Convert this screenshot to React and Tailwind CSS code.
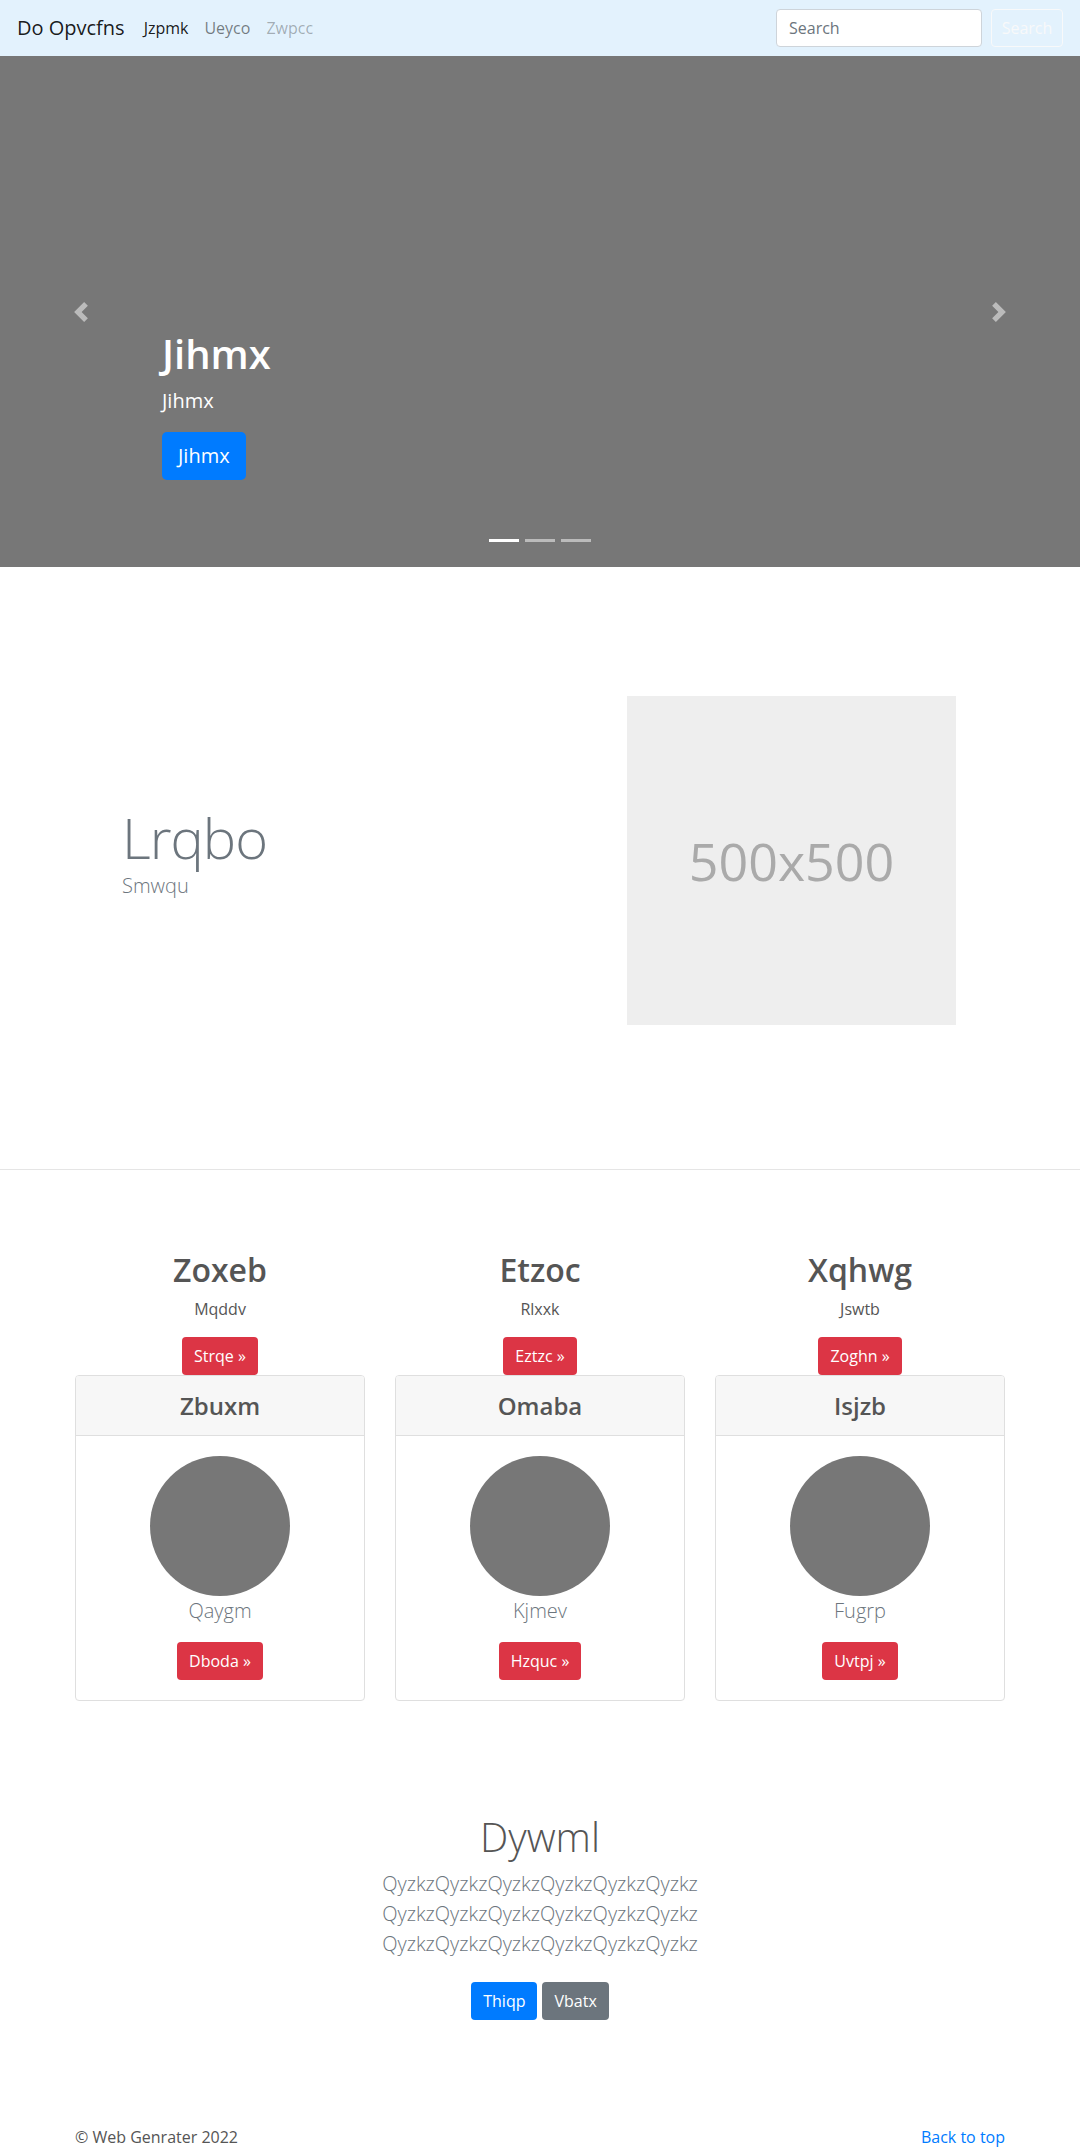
import React from 'react';

const Chevron = ({ dir }) => (
  <svg width="20" height="20" viewBox="0 0 8 8" fill="#fff" className="opacity-50">
    <path
      d={
        dir === 'prev'
          ? 'M5.25 0l-4 4 4 4 1.5-1.5L4.25 4l2.5-2.5L5.25 0z'
          : 'M2.75 0l-1.5 1.5L3.75 4l-2.5 2.5L2.75 8l4-4-4-4z'
      }
    />
  </svg>
);

const topCols = [
  { title: 'Zoxeb', sub: 'Mqddv', btn: 'Strqe', card: 'Zbuxm', name: 'Qaygm', action: 'Dboda' },
  { title: 'Etzoc', sub: 'Rlxxk', btn: 'Eztzc', card: 'Omaba', name: 'Kjmev', action: 'Hzquc' },
  { title: 'Xqhwg', sub: 'Jswtb', btn: 'Zoghn', card: 'Isjzb', name: 'Fugrp', action: 'Uvtpj' },
];

const App = () => {
  return (
    <div className="font-['Open_Sans',sans-serif] text-[#212529] bg-white">
      {/* navbar */}
      <nav className="h-[56px] bg-[#e3f2fd] flex items-center pl-[17px] pr-[17px]">
        <span className="text-[20px] text-[#000000e6] mr-[11px]">Do Opvcfns</span>
        <ul className="flex text-[16px]">
          <li className="px-[8px] text-[#000000e6]">Jzpmk</li>
          <li className="px-[8px] text-[#00000080]">Ueyco</li>
          <li className="px-[8px] text-[#0000004d]">Zwpcc</li>
        </ul>
        <div className="ml-auto flex items-center">
          <input
            type="text"
            placeholder="Search"
            className="w-[206px] h-[38px] px-[12px] text-[16px] bg-white border border-[#ced4da] rounded-[4px] placeholder:text-[#6c757d] mr-[9px]"
          />
          <button className="h-[38px] w-[72px] border border-[#f8f9fa] rounded-[4px] text-[16px] text-[#f8f9fa]">
            Search
          </button>
        </div>
      </nav>

      {/* carousel */}
      <div className="relative h-[511px] bg-[#777777] flex items-end">
        <div className="pl-[162px] pb-[87px] text-white">
          <h1 className="text-[40px] font-semibold leading-[1.2] mb-[8px]">Jihmx</h1>
          <p className="text-[20px] leading-[1.5] mb-[16px]">Jihmx</p>
          <button className="h-[48px] px-[16px] rounded-[5px] bg-[#007bff] text-[20px] text-white">Jihmx</button>
        </div>
        <div className="absolute left-0 top-0 h-full w-[162px] flex items-center justify-center">
          <Chevron dir="prev" />
        </div>
        <div className="absolute right-0 top-0 h-full w-[162px] flex items-center justify-center">
          <Chevron dir="next" />
        </div>
        <div className="absolute bottom-[25px] left-0 right-0 flex justify-center gap-[6px]">
          <span className="w-[30px] h-[3px] bg-white"></span>
          <span className="w-[30px] h-[3px] bg-white opacity-50"></span>
          <span className="w-[30px] h-[3px] bg-white opacity-50"></span>
        </div>
      </div>

      {/* featurette */}
      <section className="pt-[129px] pb-[144px] border-b border-[#e5e5e5]">
        <div className="w-[930px] mx-auto flex items-center">
          <div className="flex-1 pl-[47px]">
            <h2 className="text-[56px] font-light leading-[1.2] tracking-[-1px] text-[#6c757d]">Lrqbo</h2>
            <p className="text-[20px] font-light leading-[1.5] text-[#6c757d] mb-[16px]">Smwqu</p>
          </div>
          <div className="w-[329px] h-[329px] mr-[49px] bg-[#eeeeee] flex items-center justify-center">
            <span className="text-[52px] text-[#aaaaaa]">500x500</span>
          </div>
        </div>
      </section>

      {/* columns */}
      <section className="pt-[81px]">
        <div className="w-[930px] mx-auto grid grid-cols-3 gap-[30px]">
          {topCols.map((c) => (
            <div key={c.title} className="text-center">
              <h2 className="text-[32px] font-semibold leading-[1.2] text-[#555555] mb-[8px]">{c.title}</h2>
              <p className="text-[16px] leading-[1.5] text-[#555555] mb-[16px]">{c.sub}</p>
              <button className="h-[38px] px-[12px] rounded-[4px] bg-[#dc3545] text-white text-[16px]">
                {c.btn} »
              </button>
              <div className="border border-[#dfdfdf] rounded-[4px] overflow-hidden">
                <div className="h-[60px] bg-[#f7f7f7] border-b border-[#dfdfdf] flex items-center justify-center">
                  <h4 className="text-[24px] font-semibold text-[#555555]">{c.card}</h4>
                </div>
                <div className="p-[20px] flex flex-col items-center">
                  <div className="w-[140px] h-[140px] rounded-full bg-[#777777]"></div>
                  <p className="text-[20px] font-light leading-[1.5] text-[#6c757d] mb-[16px]">{c.name}</p>
                  <button className="h-[38px] px-[12px] rounded-[4px] bg-[#dc3545] text-white text-[16px]">
                    {c.action} »
                  </button>
                </div>
              </div>
            </div>
          ))}
        </div>
      </section>

      {/* text block */}
      <section className="pt-[112px] text-center">
        <h1 className="text-[40px] font-light leading-[1.2] text-[#555555] mb-[8px]">Dywml</h1>
        <p className="text-[20px] font-light leading-[1.5] text-[#6c757d]">
          QyzkzQyzkzQyzkzQyzkzQyzkzQyzkz
          <br />
          QyzkzQyzkzQyzkzQyzkzQyzkzQyzkz
          <br />
          QyzkzQyzkzQyzkzQyzkzQyzkzQyzkz
        </p>
        <div className="mt-[23px] flex justify-center gap-[5px]">
          <button className="h-[38px] px-[12px] rounded-[4px] bg-[#007bff] text-white text-[16px]">Thiqp</button>
          <button className="h-[38px] px-[12px] rounded-[4px] bg-[#6c757d] text-white text-[16px]">Vbatx</button>
        </div>
      </section>

      {/* footer */}
      <footer className="pt-[105px]">
        <div className="w-[930px] mx-auto flex justify-between text-[16px] leading-[1.5]">
          <p className="text-[#555555]">© Web Genrater 2022</p>
          <a href="#" className="text-[#007bff]">Back to top</a>
        </div>
      </footer>
    </div>
  );
};

export default App;
